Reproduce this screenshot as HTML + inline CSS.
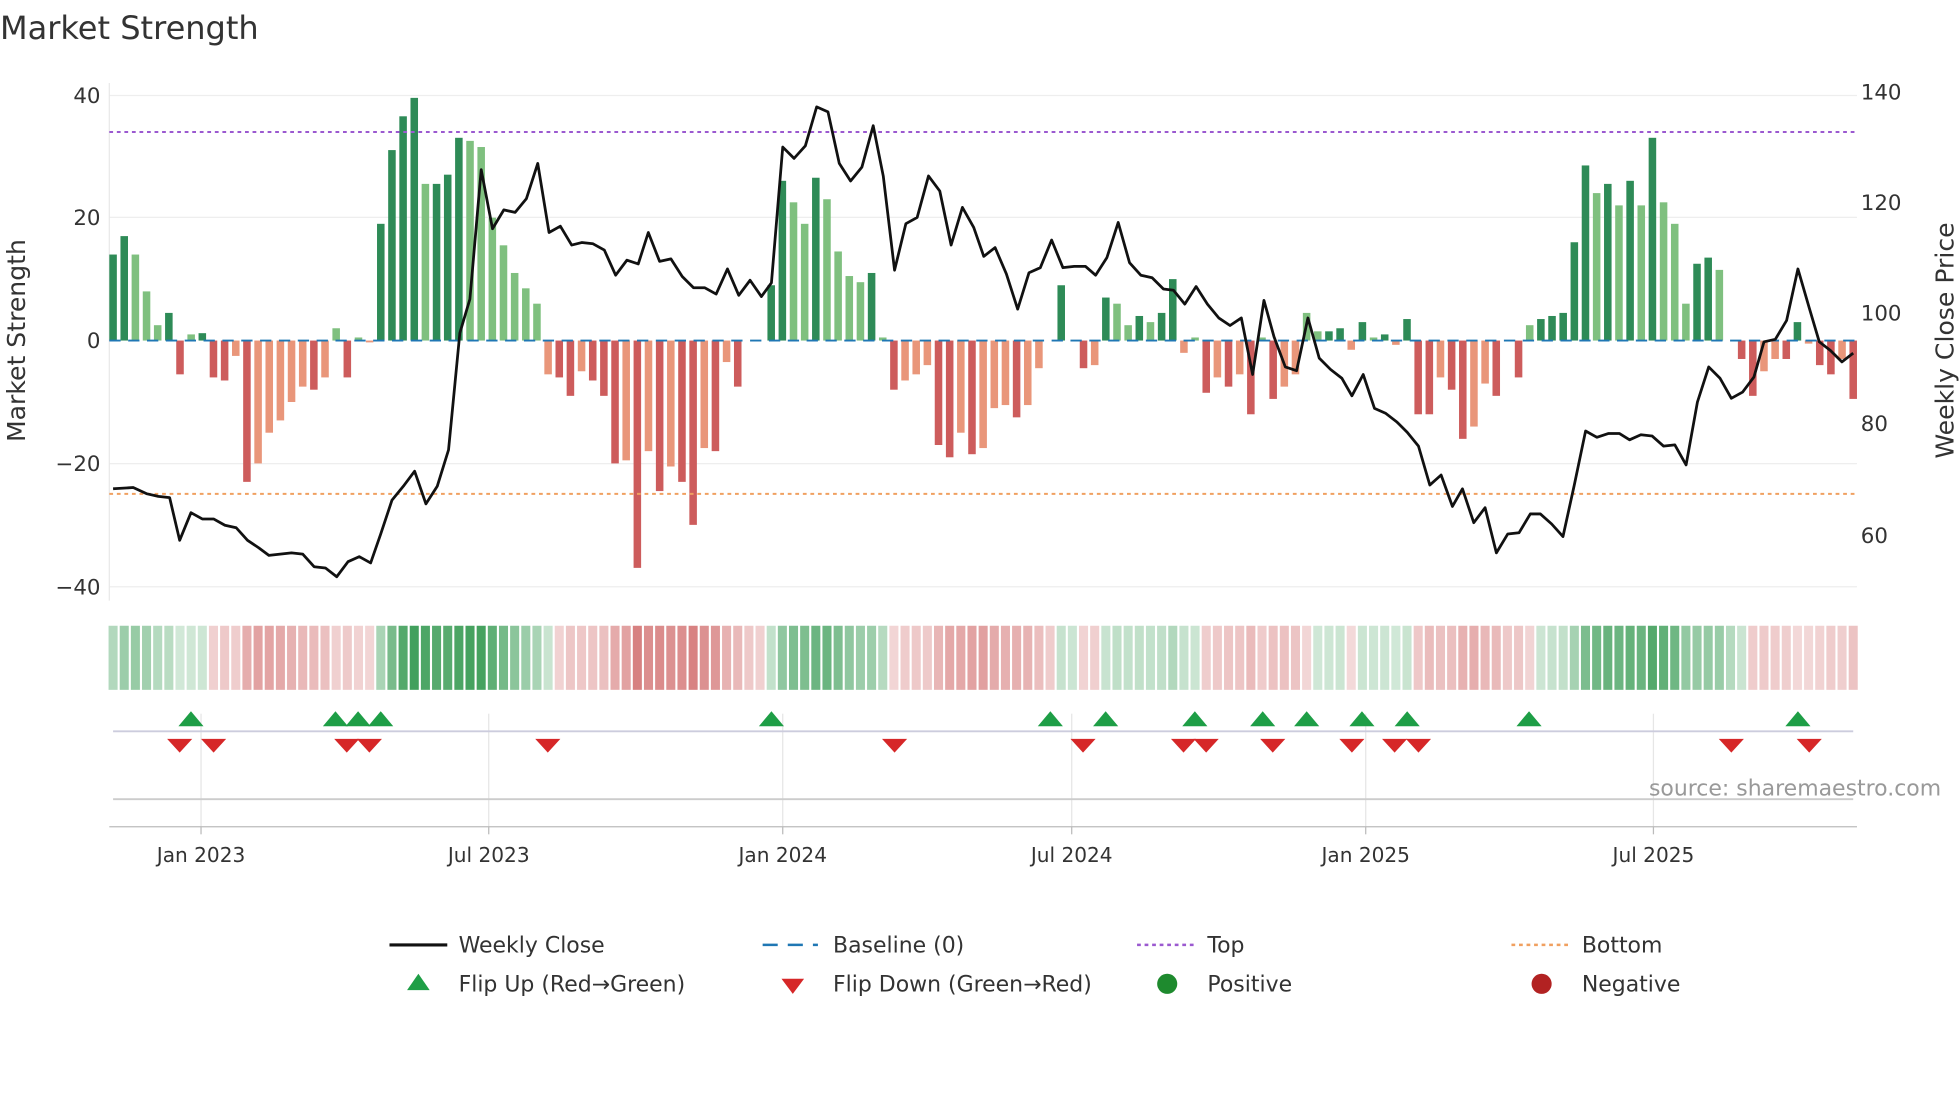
<!DOCTYPE html>
<html><head><meta charset="utf-8">
<style>html,body{margin:0;padding:0;background:#fff;}svg{display:block;font-family:"DejaVu Sans","Liberation Sans",sans-serif;}</style>
</head><body>
<svg id="s" width="1960" height="1102" viewBox="0 0 1560 877" xmlns="http://www.w3.org/2000/svg">
<rect width="1560" height="877" fill="#fff"/>
<text x="0" y="31" font-size="25.5" fill="#333">Market Strength</text>
<g stroke="#eee" stroke-width="1">
<line x1="87" x2="1478" y1="76" y2="76"/><line x1="87" x2="1478" y1="173" y2="173"/><line x1="87" x2="1478" y1="369" y2="369"/><line x1="87" x2="1478" y1="467" y2="467"/>
</g>
<line x1="87" x2="87" y1="66" y2="478" stroke="#e8e8e8"/>
<g font-size="17" fill="#333" text-anchor="end">
<text x="80" y="82">40</text><text x="80" y="179">20</text><text x="80" y="277">0</text><text x="80" y="375">−20</text><text x="80" y="473">−40</text>
</g>
<g font-size="17" fill="#333">
<text x="1481" y="79">140</text><text x="1481" y="167">120</text><text x="1481" y="255">100</text><text x="1481" y="343">80</text><text x="1481" y="432">60</text>
</g>
<text transform="translate(20,271) rotate(-90)" font-size="20" fill="#333" text-anchor="middle">Market Strength</text>
<text transform="translate(1555,271) rotate(-90)" font-size="20" fill="#333" text-anchor="middle">Weekly Close Price</text>
<g id="bars"></g>
<line x1="87" x2="1478" y1="271" y2="271" stroke="#1f77b4" stroke-width="1.5" stroke-dasharray="9,6"/>
<line x1="87" x2="1478" y1="105" y2="105" stroke="#9b59d0" stroke-width="1.6" stroke-dasharray="3,3"/>
<line x1="87" x2="1478" y1="393" y2="393" stroke="#f0a060" stroke-width="1.6" stroke-dasharray="3,3"/>
<polyline id="pl" fill="none" stroke="#111" stroke-width="2.2" stroke-linejoin="round"/>
<g id="strip"></g>
<g stroke="#e6e6e6"><line x1="160" x2="160" y1="568" y2="658"/><line x1="389" x2="389" y1="568" y2="658"/><line x1="623" x2="623" y1="568" y2="658"/><line x1="853" x2="853" y1="568" y2="658"/><line x1="1087" x2="1087" y1="568" y2="658"/><line x1="1316" x2="1316" y1="568" y2="658"/></g>
<line x1="90" x2="1475" y1="582" y2="582" stroke="#ccd" stroke-width="1.5"/>
<line x1="90" x2="1475" y1="636" y2="636" stroke="#ccc" stroke-width="1.5"/>
<g id="mk"></g>
<text x="1545" y="633" font-size="17.5" fill="#999" text-anchor="end">source: sharemaestro.com</text>
<line x1="87" x2="1478" y1="658" y2="658" stroke="#bbb"/>
<g stroke="#bbb"><line x1="160" x2="160" y1="658" y2="664"/><line x1="389" x2="389" y1="658" y2="664"/><line x1="623" x2="623" y1="658" y2="664"/><line x1="853" x2="853" y1="658" y2="664"/><line x1="1087" x2="1087" y1="658" y2="664"/><line x1="1316" x2="1316" y1="658" y2="664"/></g>
<g font-size="16" fill="#333" text-anchor="middle">
<text x="160" y="686">Jan 2023</text><text x="389" y="686">Jul 2023</text><text x="623" y="686">Jan 2024</text><text x="853" y="686">Jul 2024</text><text x="1087" y="686">Jan 2025</text><text x="1316" y="686">Jul 2025</text>
</g>
<g font-size="17.5" fill="#333">
<line x1="310" x2="356" y1="752" y2="752" stroke="#111" stroke-width="2.5"/><text x="365" y="758">Weekly Close</text>
<line x1="607" x2="651" y1="752" y2="752" stroke="#1f77b4" stroke-width="2" stroke-dasharray="12,8"/><text x="663" y="758">Baseline (0)</text>
<line x1="905" x2="950" y1="752" y2="752" stroke="#9b59d0" stroke-width="2" stroke-dasharray="3,3"/><text x="961" y="758">Top</text>
<line x1="1203" x2="1248" y1="752" y2="752" stroke="#f0a060" stroke-width="2" stroke-dasharray="3,3"/><text x="1259" y="758">Bottom</text>
<polygon points="324,788 342,788 333,775" fill="#1e9e46"/><text x="365" y="789">Flip Up (Red→Green)</text>
<polygon points="622,779 640,779 631,791" fill="#d62728"/><text x="663" y="789">Flip Down (Green→Red)</text>
<circle cx="929" cy="783" r="8" fill="#1e8a2e"/><text x="961" y="789">Positive</text>
<circle cx="1227" cy="783" r="8" fill="#b22222"/><text x="1259" y="789">Negative</text>
</g>
</svg>
<script>
var v=[14,17,14,8,2.5,4.5,-5.5,1,1.2,-6,-6.5,-2.5,-23,-20,-15,-13,-10,-7.5,-8,-6,2,-6,0.5,-0.3,19,31,36.5,39.5,25.5,25.5,27,33,32.5,31.5,20,15.5,11,8.5,6,-5.5,-6,-9,-5,-6.5,-9,-20,-19.5,-37,-18,-24.5,-20.5,-23,-30,-17.5,-18,-3.5,-7.5,0,0,9,26,22.5,19,26.5,23,14.5,10.5,9.5,11,0.5,-8,-6.5,-5.5,-4,-17,-19,-15,-18.5,-17.5,-11,-10.5,-12.5,-10.5,-4.5,0,9,0,-4.5,-4,7,6,2.5,4,3,4.5,10,-2,0.5,-8.5,-6,-7.5,-5.5,-12,0.5,-9.5,-7.5,-5.5,4.5,1.5,1.5,2,-1.5,3,0.5,1,-0.7,3.5,-12,-12,-6,-8,-16,-14,-7,-9,0,-6,2.5,3.5,4,4.5,16,28.5,24,25.5,22,26,22,33,22.5,19,6,12.5,13.5,11.5,0,-3,-9,-5,-3,-3,3,-0.5,-4,-5.5,-3,-9.5];
var NS="http://www.w3.org/2000/svg",x0=90,dx=(1475-90)/(v.length-1);
function el(t,a,p){var e=document.createElementNS(NS,t);for(var k in a)e.setAttribute(k,a[k]);document.getElementById(p).appendChild(e);}
var sm=0;
for(var i=0;i<v.length;i++){var x=x0+i*dx,val=v[i],h=Math.abs(val)*4.89,pr=i?Math.abs(v[i-1]):0,dark=Math.abs(val)>=pr;
 var c=val>=0?(dark?"#2e8b57":"#7fc07f"):(dark?"#cd5c5c":"#e9967a");
 if(h>0.3)el("rect",{x:x-3,y:val>=0?271-h:271,width:6,height:h,fill:c},"bars");
 sm=sm*0.5+val*0.5;var s=sm>=0?1:-1;var a=Math.min(1,Math.abs(sm)/32);
 var col=s>0?"rgba(46,150,75,"+(0.22+0.68*a)+")":"rgba(200,80,80,"+(0.22+0.6*a)+")";
 el("rect",{x:x-3.6,y:498,width:7.2,height:51,fill:col},"strip");}
var pts=[[90,389],[106,388],[117,393],[126,395],[135,396],[143,430],[152,408],[161,413],[170,413],[179,418],[188,420],[197,430],[206,436],[214,442],[223,441],[232,440],[241,441],[250,451],[259,452],[268,459],[277,447],[286,443],[295,448],[303,425],[312,398],[321,387],[330,375],[339,401],[348,387],[357,358],[366,265],[374,238],[383,135],[392,182],[401,167],[410,169],[419,158],[428,130],[437,185],[446,180],[455,195],[463,193],[472,194],[481,199],[490,219],[499,207],[508,210],[516,185],[525,208],[534,206],[543,220],[552,229],[561,229],[570,234],[579,214],[588,235],[597,223],[606,236],[614,225],[623,117],[632,126],[641,116],[650,85],[659,89],[668,130],[677,144],[686,133],[695,100],[703,140],[712,215],[721,178],[730,173],[739,140],[748,152],[757,195],[766,165],[775,181],[783,204],[792,197],[801,218],[810,246],[819,217],[828,213],[837,191],[846,213],[855,212],[864,212],[872,219],[881,205],[890,177],[899,209],[908,219],[917,221],[926,230],[934,231],[943,242],[952,228],[961,242],[970,253],[979,259],[988,253],[997,298],[1006,239],[1014,268],[1023,292],[1032,295],[1041,253],[1050,285],[1059,294],[1068,301],[1076,315],[1085,298],[1094,325],[1103,329],[1112,336],[1120,344],[1129,355],[1138,386],[1147,378],[1156,403],[1164,389],[1173,416],[1182,404],[1191,440],[1200,425],[1209,424],[1218,409],[1226,409],[1235,417],[1244,427],[1253,386],[1262,343],[1271,348],[1280,345],[1289,345],[1297,350],[1306,346],[1315,347],[1324,355],[1333,354],[1342,370],[1351,320],[1360,292],[1369,301],[1378,317],[1387,312],[1396,300],[1404,272],[1413,270],[1422,255],[1431,214],[1440,245],[1448,272],[1457,279],[1466,288],[1475,281]];
document.getElementById("pl").setAttribute("points",pts.map(function(p){return p.join(",")}).join(" "));
[152,267,285,303,614,836,880,951,1005,1040,1084,1120,1217,1431].forEach(function(x){el("polygon",{points:(x-10)+",578 "+(x+10)+",578 "+x+",566",fill:"#1e9e46"},"mk");});
[143,170,276,294,436,712,862,942,960,1013,1076,1110,1129,1378,1440].forEach(function(x){el("polygon",{points:(x-10)+",588 "+(x+10)+",588 "+x+",599",fill:"#d62728"},"mk");});
</script>
</body></html>
